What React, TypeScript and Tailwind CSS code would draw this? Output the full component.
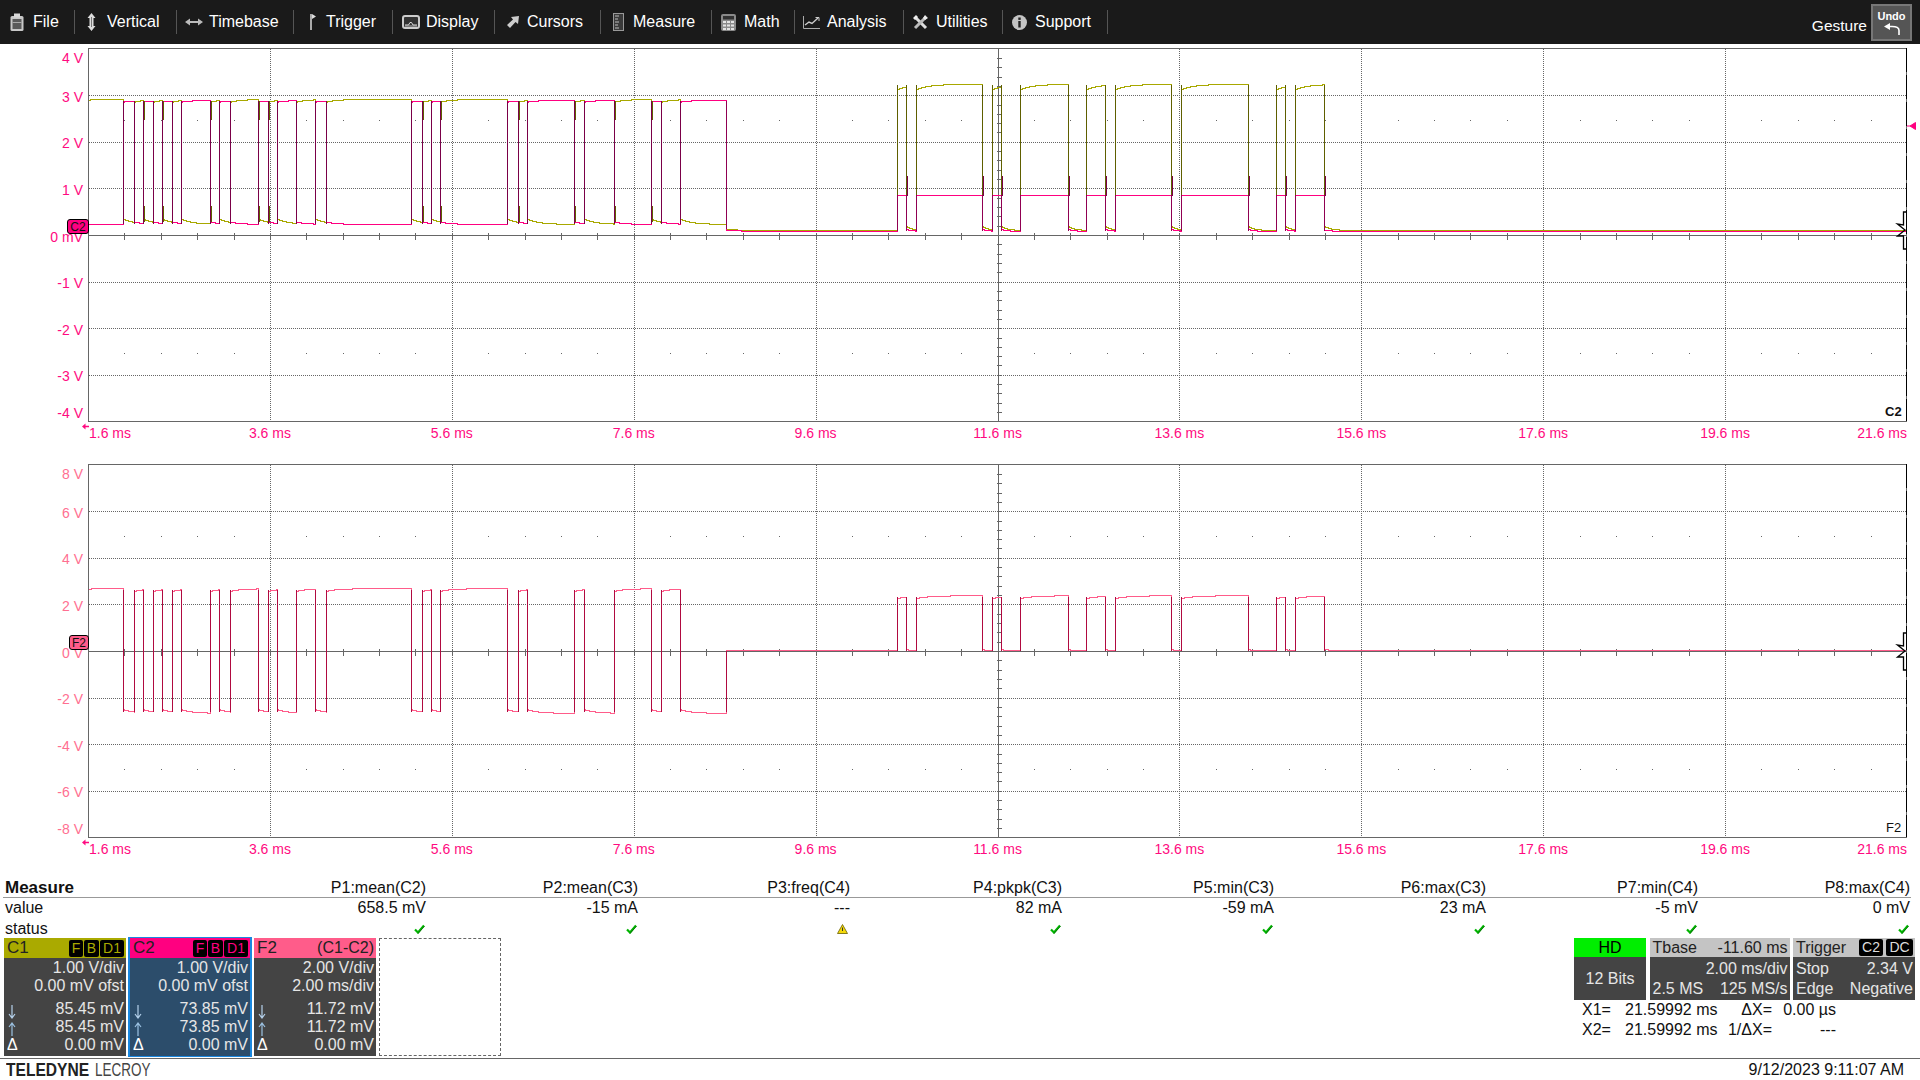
import type { ReactNode } from 'react';

type Level = [number, number, number];
type Seg = { x0: number; x1: number; c1: Level; c2: Level };

// edge positions read off the capture, page pixels
const frameEdges = [
  123.4, 134.6, 143.5, 153.3, 162.7, 172.5, 181.4, 210, 219.4, 230.5, 258.7, 268.5, 277.4, 296.6, 315.4, 326.5, 411.3,
  422, 431.4, 440.8, 507.3, 518, 527.4, 574.3, 584.6, 614.5, 651.5, 661.3, 680.5, 726.5,
];
const burstEdges = [
  897.3, 906.7, 916.3, 982.3, 992.3, 1001.3, 1020.3, 1068, 1086.3, 1105.3, 1115.3, 1171.7, 1181.3, 1248, 1276.3, 1285.7,
  1295.3, 1324,
];

const segs: Seg[] = [];
segs.push({ x0: 88.5, x1: frameEdges[0], c1: [100.3, 99.3, 3], c2: [224.3, 224.3, 1] });
frameEdges.slice(0, -1).forEach((x, i) => {
  const low = i % 2 === 0;
  segs.push({
    x0: x,
    x1: frameEdges[i + 1],
    c1: low ? [219.3, 224.5, 12] : [102, 99.3, 12],
    c2: low ? [102, 100.3, 12] : [222, 224.3, 8],
  });
});
const idle1: Level = [229.3, 230.5, 12];
const idle2: Level = [230, 231.3, 10];
segs.push({ x0: 726.5, x1: burstEdges[0], c1: idle1, c2: idle2 });
burstEdges.slice(0, -1).forEach((x, i) => {
  const low = i % 2 === 1;
  segs.push({
    x0: x,
    x1: burstEdges[i + 1],
    c1: low ? [226.5, 230.5, 6] : [89.5, 84.3, 13],
    c2: low ? [229.5, 231.3, 5] : [195.3, 195.3, 1],
  });
});
segs.push({ x0: 1324, x1: 1906, c1: [226.5, 230.5, 7], c2: [230, 231.3, 5] });

const snap = (v: number) => Math.round(v - 0.5) + 0.5;
const at = (l: Level, dx: number) => l[1] + (l[0] - l[1]) * Math.exp(-dx / l[2]);

function tracePath(val: (s: Seg, dx: number) => number) {
  let d = '';
  segs.forEach((s) => {
    for (let x = s.x0; x < s.x1; x += 1) {
      const px = snap(x);
      const py = snap(val(s, x - s.x0));
      d += d ? `H${px}V${py}` : `M${px} ${py}`;
    }
  });
  return d;
}

const c1Path = tracePath((s, dx) => at(s.c1, dx));
const c2Path = tracePath((s, dx) => at(s.c2, dx));
const f2Path = tracePath((s, dx) => 651.3 + (at(s.c1, dx) - at(s.c2, dx)) / 2);

const vLine = (x: number, a: number, b: number) => `M${snap(x)} ${a}V${b}`;

const frameDark = frameEdges.map((x) => vLine(x, 101, 224)).join('');
const frameOlive = frameEdges
  .filter((_, i) => [2, 4, 7, 10, 11, 17, 19, 21, 23, 25, 26].includes(i))
  .map((x) => vLine(x + 1, 101, 120) + vLine(x + 1, 206, 222))
  .join('');
const burstUpper = burstEdges.map((x) => vLine(x, 85, 195)).join('');
const burstLower = burstEdges.map((x) => vLine(x, 195, 231)).join('');
const burstFall = burstEdges
  .filter((_, i) => i % 2 === 1)
  .map((x) => vLine(x + 1, 176, 196))
  .join('');

const f2Frame = frameEdges
  .slice(0, -1)
  .map((x) => vLine(x, 590, 712))
  .join('');
const f2Burst = burstEdges.map((x) => vLine(x, 597, 651)).join('');

const majorX = Array.from({ length: 9 }, (_, i) => 88.5 + 181.9 * (i + 1));
const minorX = Array.from({ length: 49 }, (_, i) => 88.5 + 36.38 * (i + 1));

function Grid({ top }: { top: number }) {
  const step = 46.6;
  const mid = top + 187.5;
  const rows = [-3, -2, -1, 1, 2, 3].map((i) => snap(mid + step * i));
  const ticks = Array.from({ length: 39 }, (_, i) => snap(mid + (step / 5) * (i - 19)));
  const cx = snap(998);
  return (
    <g shapeRendering="crispEdges" fill="none" stroke="#666">
      <g strokeDasharray="1 1">
        {rows.map((y) => (
          <path key={y} d={`M89 ${y}H1906`} />
        ))}
        {majorX
          .filter((x) => Math.abs(x - 998) > 2)
          .map((x) => (
            <path key={x} d={`M${snap(x)} ${top + 1}V${top + 373}`} />
          ))}
      </g>
      <g strokeDasharray="1 200">
        {minorX
          .filter((_, i) => (i + 1) % 5 !== 0)
          .map((x) => (
            <g key={x}>
              <path d={`M${snap(x)} ${snap(mid - step * 2.5)}v1`} />
              <path d={`M${snap(x)} ${snap(mid + step * 2.5)}v1`} />
            </g>
          ))}
      </g>
      <path d={`M89 ${mid}H1906`} />
      <path d={`M${cx} ${top}V${top + 373}`} />
      {minorX.map((x) => (
        <path key={x} d={`M${snap(x)} ${mid - 3}v7`} />
      ))}
      {ticks.map((y) => (
        <path key={y} d={`M${cx - 2} ${y}h5`} />
      ))}
      <rect x="88.5" y={top + 0.5} width="1818" height="372.5" />
      <path d={`M1906.5 ${top}V${top + 373}`} stroke="#000" strokeDasharray="24 3" />
    </g>
  );
}

function GroundMark({ cy }: { cy: number }) {
  return (
    <path
      d={`M1907 ${cy - 18}H1903.5V${cy - 5}L1897.5 ${cy - 6}L1905 ${cy}L1897.5 ${cy + 6}L1903.5 ${cy + 6}V${cy + 19}H1907`}
      fill="none"
      stroke="#000"
      strokeWidth="1.3"
    />
  );
}

function Plot({ labels, color, children }: { labels: string[]; color: string; children: ReactNode }) {
  return (
    <div className="relative flex h-[374px]">
      <div className={`flex w-[88px] shrink-0 flex-col gap-[28.65px] pr-[5px] pt-[1px] text-right text-[14px] leading-[18px] ${color}`}>
        {labels.map((l, i) => (
          <div key={l} className={i === 0 ? 'h-[18px] -mb-[8px]' : i === 8 ? 'h-[18px] -mt-[10px]' : 'h-[18px]'}>
            {l}
          </div>
        ))}
      </div>
      {children}
    </div>
  );
}

const timeLabels = ['3.6 ms', '5.6 ms', '7.6 ms', '9.6 ms', '11.6 ms', '13.6 ms', '15.6 ms', '17.6 ms', '19.6 ms'];

function TimeAxis({ height }: { height: string }) {
  return (
    <div className={`relative ml-[88px] grid w-[1819px] grid-cols-[91px_repeat(9,181.9px)_91px] pt-[2px] text-[14px] leading-[18px] text-[#ff0a80] ${height}`}>
      <svg className="absolute -left-[6px] top-[1px] h-[7px] w-[7px]" viewBox="0 0 7 7">
        <path d="M0 3.5L3.5 0.5V2.7H7V4.3H3.5V6.5Z" fill="#ff0a80" />
      </svg>
      <div className="pl-[1px]">1.6 ms</div>
      {timeLabels.map((t) => (
        <div key={t} className="text-center">
          {t}
        </div>
      ))}
      <div className="text-right">21.6 ms</div>
    </div>
  );
}

// toolbar glyphs
const icons = {
  file: (
    <svg width="14" height="18" viewBox="0 0 14 18">
      <rect x="0.5" y="3" width="13" height="15" rx="1.5" fill="#c8c8c8" />
      <rect x="4" y="0.5" width="6" height="4" fill="#d8d8d8" />
      <rect x="2.5" y="6" width="9" height="10" fill="#5a5a5a" />
      <rect x="2.5" y="9" width="9" height="1" fill="#aaa" />
    </svg>
  ),
  vertical: (
    <svg width="11" height="18" viewBox="0 0 11 18">
      <path d="M5.5 0L9.5 5H7.5V13H9.5L5.5 18L1.5 13H3.5V5H1.5Z" fill="#ddd" />
      <path d="M5.5 4V14" stroke="#777" />
    </svg>
  ),
  timebase: (
    <svg width="18" height="8" viewBox="0 0 18 8">
      <path d="M0 4L5 0.5V3H13V0.5L18 4L13 7.5V5H5V7.5Z" fill="#bbb" />
    </svg>
  ),
  trigger: (
    <svg width="6" height="16" viewBox="0 0 6 16">
      <path d="M0 0H2V16H0Z" fill="#aaa" />
      <path d="M2 0L6 2.5L2 5Z" fill="#ddd" />
    </svg>
  ),
  display: (
    <svg width="18" height="14" viewBox="0 0 18 14">
      <rect x="1" y="1" width="16" height="12" rx="2" fill="#333" stroke="#ccc" strokeWidth="2" />
      <path d="M3 10H6.5L8 7.5L9.5 7.5L11 10H15" fill="none" stroke="#ddd" />
      <path d="M3 11H15" stroke="#bbb" />
    </svg>
  ),
  cursors: (
    <svg width="12" height="12" viewBox="0 0 12 12">
      <path d="M12 0L11 8L8.5 6L3 12L0 9L6 3.5L4 1Z" fill="#ccc" />
    </svg>
  ),
  measure: (
    <svg width="11" height="18" viewBox="0 0 11 18">
      <rect x="0.5" y="0.5" width="10" height="17" fill="#3a3a3a" stroke="#999" />
      <path d="M2 3H6M2 6H5M2 9H6M2 12H5M2 15H6" stroke="#bbb" />
    </svg>
  ),
  math: (
    <svg width="15" height="17" viewBox="0 0 15 17">
      <rect x="0" y="0" width="15" height="17" rx="2" fill="#8a8a8a" />
      <rect x="2" y="2" width="11" height="3.5" fill="#333" />
      <path d="M2 7H5V9H2ZM6 7H9V9H6ZM10 7H13V9H10ZM2 10.5H5V12.5H2ZM6 10.5H9V12.5H6ZM10 10.5H13V12.5H10ZM2 14H5V16H2ZM6 14H9V16H6ZM10 14H13V16H10Z" fill="#e4e4e4" />
    </svg>
  ),
  analysis: (
    <svg width="17" height="13" viewBox="0 0 17 13">
      <path d="M0.5 0V12.5H17" fill="none" stroke="#aaa" />
      <path d="M2 9L6 6L9 7.5L15 2" fill="none" stroke="#ccc" strokeWidth="1.4" />
      <path d="M12.5 1.5H16V5" fill="none" stroke="#ccc" />
    </svg>
  ),
  utilities: (
    <svg width="15" height="15" viewBox="0 0 15 15">
      <path d="M2 2L13 13" stroke="#ddd" strokeWidth="3" />
      <path d="M13 2L2 13" stroke="#bbb" strokeWidth="3" />
      <path d="M0 3L3 0L5 2L2 5ZM15 3L12 0L10 3L12 5Z" fill="#eee" />
    </svg>
  ),
  support: (
    <svg width="15" height="15" viewBox="0 0 15 15">
      <circle cx="7.5" cy="7.5" r="7.5" fill="#c4c4c4" />
      <rect x="6.3" y="2.5" width="2.4" height="2.4" fill="#222" />
      <rect x="6.3" y="6" width="2.4" height="6.5" fill="#222" />
    </svg>
  ),
};

const menu = [
  { label: 'File', icon: icons.file, cls: 'w-[75px] pl-[10px] gap-[9px]' },
  { label: 'Vertical', icon: icons.vertical, cls: 'w-[102px] pl-[11px] gap-[10px]' },
  { label: 'Timebase', icon: icons.timebase, cls: 'w-[117px] pl-[8px] gap-[6px]' },
  { label: 'Trigger', icon: icons.trigger, cls: 'w-[99px] pl-[16px] gap-[10px]' },
  { label: 'Display', icon: icons.display, cls: 'w-[102px] pl-[9px] gap-[6px]' },
  { label: 'Cursors', icon: icons.cursors, cls: 'w-[106px] pl-[12px] gap-[8px]' },
  { label: 'Measure', icon: icons.measure, cls: 'w-[111px] pl-[12px] gap-[9px]' },
  { label: 'Math', icon: icons.math, cls: 'w-[83px] pl-[9px] gap-[8px]' },
  { label: 'Analysis', icon: icons.analysis, cls: 'w-[109px] pl-[8px] gap-[7px]' },
  { label: 'Utilities', icon: icons.utilities, cls: 'w-[99px] pl-[9px] gap-[8px]' },
  { label: 'Support', icon: icons.support, cls: 'w-[105px] pl-[9px] gap-[8px]' },
];

function Toolbar() {
  return (
    <div className="flex h-[44px] shrink-0 items-start bg-[#1a1a1a] text-[16px] text-white">
      <div className="mt-[10px] flex">
        {menu.map((m) => (
          <div key={m.label} className={`flex h-[24px] items-center border-r border-[#555] ${m.cls}`}>
            <span className="flex shrink-0 items-center">{m.icon}</span>
            <span className="-mt-[1px]">{m.label}</span>
          </div>
        ))}
      </div>
      <div className="ml-auto mt-[4px] flex items-start pr-[8px]">
        <span className="mr-[4px] mt-[13px] text-[15.5px] leading-[18px]">Gesture</span>
        <div className="flex h-[37px] w-[41px] flex-col items-center border-2 border-[#777] bg-[#555] pt-[4px]">
          <span className="text-[11px] font-bold leading-[13px]">Undo</span>
          <svg width="16" height="12" viewBox="0 0 16 12">
            <path d="M15 12V7.5C15 4.5 12.5 3.5 8 3.5H5" fill="none" stroke="#fff" strokeWidth="1.6" />
            <path d="M0 3.5L6 0V7Z" fill="#fff" />
          </svg>
        </div>
      </div>
    </div>
  );
}

const Check = () => (
  <svg width="11" height="10" viewBox="0 0 11 10" className="justify-self-end">
    <path d="M1 5.5L4 8.5L10 1.5" fill="none" stroke="#00b400" strokeWidth="2.2" />
    <path d="M4 9.5L10.5 2" fill="none" stroke="#0a6a0a" strokeWidth="0.8" />
  </svg>
);

const Warn = () => (
  <svg width="11" height="10" viewBox="0 0 11 10" className="mr-[1px] justify-self-end">
    <path d="M5.5 0.5L10.5 9.5H0.5Z" fill="#f4d90a" stroke="#6a6000" strokeWidth="0.8" />
    <path d="M5.5 3.5V7" stroke="#333" />
  </svg>
);

const params = ['P1:mean(C2)', 'P2:mean(C3)', 'P3:freq(C4)', 'P4:pkpk(C3)', 'P5:min(C3)', 'P6:max(C3)', 'P7:min(C4)', 'P8:max(C4)'];
const values = ['658.5 mV', '-15 mA', '---', '82 mA', '-59 mA', '23 mA', '-5 mV', '0 mV'];

function MeasureTable() {
  return (
    <div className="ml-[3px] w-[1908px] text-[16px] text-[#111]">
      <div className="grid h-[20px] grid-cols-[211px_repeat(8,212px)] border-b border-[#999] leading-[19px]">
        <div className="pl-[2px] text-[17px] font-bold">Measure</div>
        {params.map((p) => (
          <div key={p} className="text-right">
            {p}
          </div>
        ))}
      </div>
      <div className="grid h-[19px] grid-cols-[211px_repeat(8,212px)] leading-[19px]">
        <div className="pl-[2px]">value</div>
        {values.map((v) => (
          <div key={v} className="text-right">
            {v}
          </div>
        ))}
      </div>
      <div className="grid h-[21px] grid-cols-[211px_repeat(8,212px)] items-center pb-[2px]">
        <div className="pl-[2px]">status</div>
        {values.map((v, i) => (
          <div key={v} className="flex justify-end pr-[1px]">
            {i === 2 ? <Warn /> : <Check />}
          </div>
        ))}
      </div>
    </div>
  );
}

const Tag = ({ children, cls }: { children: ReactNode; cls: string }) => (
  <span className={`flex h-[17px] items-center justify-center rounded-[2px] bg-black text-[14px] ${cls}`}>{children}</span>
);

const DownMark = () => (
  <svg width="8" height="14" viewBox="0 0 8 14" className="mt-[5px]">
    <path d="M4 0V13M1 9L4 13L7 9" fill="none" stroke="#b4d0ea" strokeWidth="1.2" />
  </svg>
);

const UpMark = () => (
  <svg width="8" height="14" viewBox="0 0 8 14" className="mt-[4px]">
    <path d="M4 14V1M1 5L4 1L7 5" fill="none" stroke="#9cc2e2" strokeWidth="1.2" />
  </svg>
);

function ChannelRows({ rows }: { rows: [string, string, string] }) {
  return (
    <div className="mt-[5px]">
      <div className="flex h-[18px] justify-between pl-[1px]">
        <DownMark />
        <span>{rows[0]}</span>
      </div>
      <div className="flex h-[18px] justify-between pl-[1px]">
        <UpMark />
        <span>{rows[1]}</span>
      </div>
      <div className="flex h-[18px] justify-between">
        <span className="text-white">Δ</span>
        <span>{rows[2]}</span>
      </div>
    </div>
  );
}

function ChannelBox({
  name,
  tags,
  scale,
  second,
  rows,
  titleCls,
  boxCls,
  tagText,
}: {
  name: string;
  tags?: boolean;
  scale: string;
  second: string;
  rows: [string, string, string];
  titleCls: string;
  boxCls: string;
  tagText?: string;
}) {
  return (
    <div className={`flex flex-col text-[16px] leading-[18px] ${boxCls}`}>
      <div className={`flex h-[20px] shrink-0 items-center justify-between pl-[3px] pr-[2px] text-[17px] text-[#222] ${titleCls}`}>
        <span>{name}</span>
        {tags ? (
          <div className="flex gap-[1px]">
            <Tag cls={`w-[14px] ${tagText}`}>F</Tag>
            <Tag cls={`w-[15px] ${tagText}`}>B</Tag>
            <Tag cls={`w-[24px] ${tagText}`}>D1</Tag>
          </div>
        ) : (
          <span className="text-[16px]">(C1-C2)</span>
        )}
      </div>
      <div className="flex-1 pl-[3px] pr-[2px] pt-[1px] text-[#e6e6e6]">
        <div className="text-right">{scale}</div>
        <div className="text-right">{second}</div>
        <ChannelRows rows={rows} />
      </div>
    </div>
  );
}

function Channels() {
  return (
    <div className="flex h-[118px] pl-[4px]">
      <ChannelBox
        name="C1"
        tags
        tagText="text-[#aaaa00]"
        scale="1.00 V/div"
        second="0.00 mV ofst"
        rows={['85.45 mV', '85.45 mV', '0.00 mV']}
        titleCls="bg-[#aaaa00]"
        boxCls="w-[122px] bg-[#444444]"
      />
      <ChannelBox
        name="C2"
        tags
        tagText="text-[#ff0080]"
        scale="1.00 V/div"
        second="0.00 mV ofst"
        rows={['73.85 mV', '73.85 mV', '0.00 mV']}
        titleCls="bg-[#ff0080]"
        boxCls="ml-[2px] -mt-[1px] h-[120px] w-[124px] border-x-2 border-y border-[#1a88e0] bg-[#2c4d6b]"
      />
      <ChannelBox
        name="F2"
        scale="2.00 V/div"
        second="2.00 ms/div"
        rows={['11.72 mV', '11.72 mV', '0.00 mV']}
        titleCls="bg-[#ff5c8a]"
        boxCls="ml-[2px] w-[122px] bg-[#444444]"
      />
      <div className="ml-[3px] w-[122px] border border-dashed border-[#666]" />
    </div>
  );
}

function Readouts() {
  return (
    <div className="flex w-[341px] flex-col text-[16px]">
      <div className="flex h-[62px] justify-between">
        <div className="flex w-[72px] flex-col bg-[#444444]">
          <div className="h-[19px] bg-[#00ee00] text-center leading-[19px] text-black">HD</div>
          <div className="flex flex-1 items-center justify-center text-[#e6e6e6]">12 Bits</div>
        </div>
        <div className="flex w-[140px] flex-col bg-[#444444] text-[#e6e6e6]">
          <div className="flex h-[19px] justify-between bg-[#c4c4c4] pl-[3px] pr-[2px] leading-[19px] text-[#222]">
            <span>Tbase</span>
            <span>-11.60 ms</span>
          </div>
          <div className="pl-[3px] pr-[2px] pt-[2px] leading-[20px]">
            <div className="text-right">2.00 ms/div</div>
            <div className="flex justify-between">
              <span>2.5 MS</span>
              <span>125 MS/s</span>
            </div>
          </div>
        </div>
        <div className="flex w-[122px] flex-col bg-[#444444] text-[#e6e6e6]">
          <div className="flex h-[19px] items-center justify-between bg-[#c4c4c4] pl-[3px] pr-[2px] text-[#222]">
            <span>Trigger</span>
            <div className="flex gap-[3px] text-[#ddd]">
              <Tag cls="w-[24px]">C2</Tag>
              <Tag cls="w-[27px]">DC</Tag>
            </div>
          </div>
          <div className="pl-[3px] pr-[2px] pt-[2px] leading-[20px]">
            <div className="flex justify-between">
              <span>Stop</span>
              <span>2.34 V</span>
            </div>
            <div className="flex justify-between">
              <span>Edge</span>
              <span>Negative</span>
            </div>
          </div>
        </div>
      </div>
      <div className="grid grid-cols-[43px_91px_56px_64px] whitespace-nowrap pl-[8px] leading-[20px] text-[#111]">
        <span>X1=</span>
        <span>21.59992 ms</span>
        <span className="text-right">ΔX=</span>
        <span className="text-right">0.00 µs</span>
        <span>X2=</span>
        <span>21.59992 ms</span>
        <span className="text-right">1/ΔX=</span>
        <span className="text-right">---</span>
      </div>
    </div>
  );
}

function Logo() {
  return (
    <div className="ml-[6px] flex h-[21px] items-center whitespace-nowrap text-[19px] leading-[20px]">
      <span className="block w-[89px] origin-left scale-x-[0.82] font-bold text-[#222]">TELEDYNE</span>
      <span className="block w-[57px] origin-left scale-x-[0.71] text-[#444]">LECROY</span>
    </div>
  );
}

export default function App() {
  return (
    <div className="flex h-[1080px] w-[1920px] flex-col overflow-hidden bg-white font-['Liberation_Sans',Arial,sans-serif]">
      <Toolbar />
      <div className="mt-[4px]">
        <Plot labels={['4 V', '3 V', '2 V', '1 V', '0 mV', '-1 V', '-2 V', '-3 V', '-4 V']} color="text-[#ff0a80]">
          <svg className="h-[374px] w-[1820px] overflow-visible" viewBox="88 48 1820 374">
            <Grid top={48} />
            <g fill="none" shapeRendering="crispEdges">
              <path d={c1Path} stroke="#a8a800" />
              <path d={c2Path} stroke="#ff0080" />
              <path d={frameDark} stroke="#7a0048" />
              <path d={frameOlive} stroke="#5f5f00" />
              <path d={burstUpper} stroke="#5f5f00" />
              <path d={burstLower} stroke="#900052" />
              <path d={burstFall} stroke="#7a0048" />
              <path d={vLine(726.5, 101, 229)} stroke="#900052" />
            </g>
            <GroundMark cy={230} />
            <path d="M1907 126H1910L1915.5 122.5V129.5L1910 126" fill="#ff0080" stroke="#ff0080" />
          </svg>
          <div className="absolute left-[67px] top-[171px] flex h-[15px] w-[22px] items-center justify-center rounded-[3px] border border-black bg-[#ff0080] text-[12px] leading-none text-[#111]">
            C2
          </div>
          <div className="absolute left-[1885px] top-[356px] text-[13px] font-bold leading-[16px] text-[#111]">C2</div>
        </Plot>
        <TimeAxis height="h-[42px]" />
        <Plot labels={['8 V', '6 V', '4 V', '2 V', '0 V', '-2 V', '-4 V', '-6 V', '-8 V']} color="text-[#ff6f91]">
          <svg className="h-[374px] w-[1820px] overflow-visible" viewBox="88 464 1820 374">
            <Grid top={464} />
            <g fill="none" shapeRendering="crispEdges">
              <path d={f2Path} stroke="#ff5c8a" />
              <path d={f2Frame} stroke="#b00a40" />
              <path d={f2Burst} stroke="#b00a40" />
              <path d={vLine(726.5, 651, 712)} stroke="#b00a40" />
            </g>
            <GroundMark cy={651} />
          </svg>
          <div className="absolute left-[69px] top-[171px] flex h-[15px] w-[20px] items-center justify-center rounded-[3px] border border-black bg-[#ff5c8a] text-[12px] leading-none text-[#111]">
            F2
          </div>
          <div className="absolute left-[1886px] top-[356px] text-[13px] leading-[16px] text-[#111]">F2</div>
        </Plot>
        <TimeAxis height="h-[40px]" />
      </div>
      <MeasureTable />
      <div className="flex justify-between pr-[5px]">
        <Channels />
        <Readouts />
      </div>
      <div className="mt-[2px] flex flex-1 justify-between border-t border-[#666]">
        <Logo />
        <span className="pr-[16px] pt-[1px] text-[16px] leading-[20px] text-[#111]">9/12/2023 9:11:07 AM</span>
      </div>
    </div>
  );
}
